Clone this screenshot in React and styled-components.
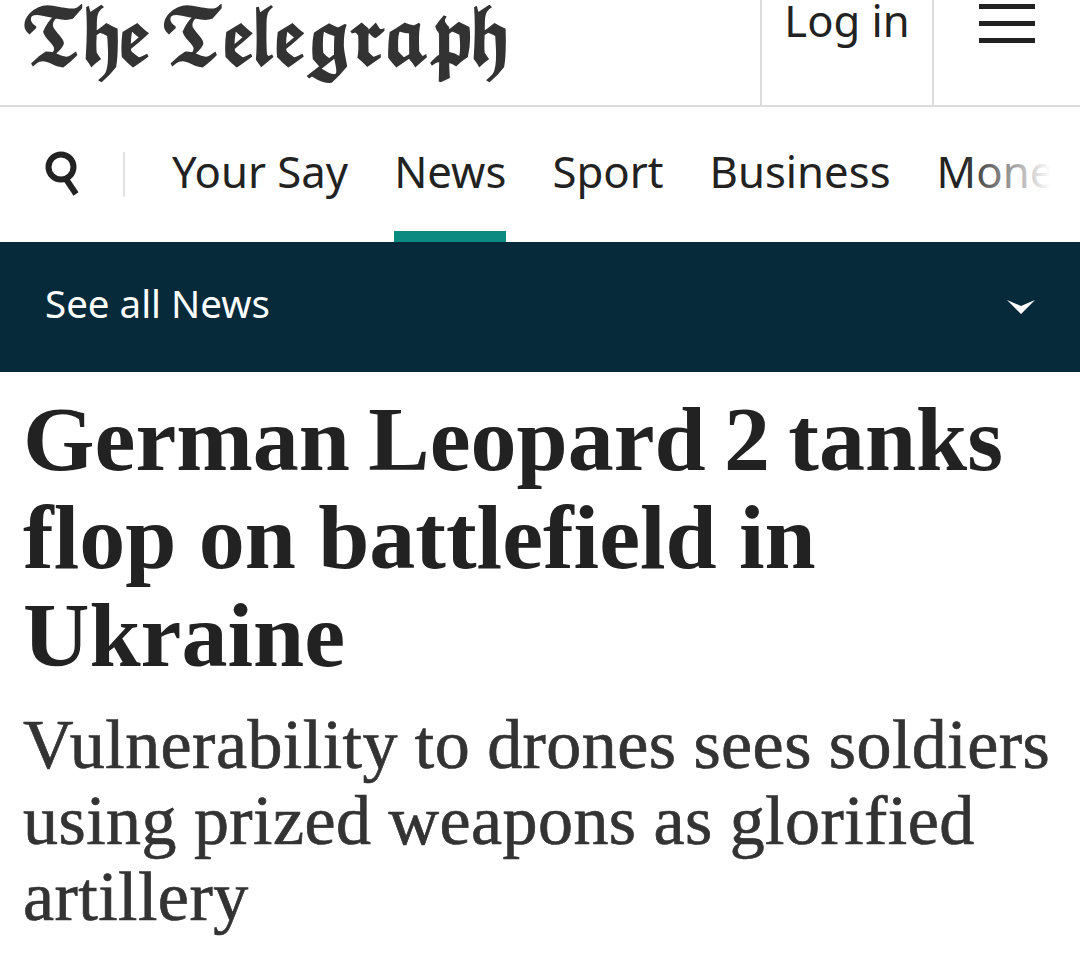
import React from "react";
import styled, { createGlobalStyle } from "styled-components";

const Global = createGlobalStyle`
  html, body { margin: 0; padding: 0; background: #fff; }
  body { width: 1080px; height: 956px; overflow: hidden; }
`;
const Page = styled.div`
  width: 1080px;
  height: 956px;
  overflow: hidden;
  color: #222;
`;
const Masthead = styled.header`
  display: flex;
  height: 105px;
  border-bottom: 2px solid #dcdcdc;
`;
const LogoCell = styled.div`
  flex: 1;
  padding: 0 0 0 20px;
`;
const Logo = styled.a`
  display: block;
  font-family: "DejaVu Math TeX Gyre", "Liberation Serif", serif;
  font-size: 74px;
  line-height: 84px;
  letter-spacing: -6px;
  word-spacing: -4px;
  color: #333;
  white-space: nowrap;
  -webkit-text-stroke: 1.8px #333;
  transform: scaleX(0.875);
  transform-origin: left center;
`;
const Login = styled.a`
  width: 174px;
  height: 105px;
  box-sizing: border-box;
  border-left: 2px solid #dcdcdc;
  border-right: 2px solid #dcdcdc;
  text-align: center;
  font-family: "Noto Sans", sans-serif;
  font-size: 43.5px;
  line-height: 41px;
  color: #222;
`;
const Menu = styled.button`
  width: 146px;
  height: 105px;
  padding: 4px 0 0 45px;
  border: 0;
  background: none;
  display: flex;
  flex-direction: column;
  gap: 12px;
`;
const MenuBar = styled.span`
  display: block;
  width: 56px;
  height: 5px;
  background: #222;
`;
const Nav = styled.nav`
  display: flex;
  align-items: stretch;
  height: 135px;
`;
const SearchCell = styled.div`
  display: flex;
  align-items: center;
  padding: 0 0 4px 45px;
`;
const Divider = styled.span`
  width: 2px;
  height: 45px;
  margin: 4px 47px 0 42px;
  background: #e2e2e2;
`;
const Tabs = styled.div`
  position: relative;
  display: flex;
  gap: 46px;
  width: 908px;
  overflow: hidden;
`;
const Tab = styled.a`
  display: flex;
  align-items: center;
  height: 135px;
  box-sizing: border-box;
  padding: 4px 0 0;
  font-family: "Noto Sans", sans-serif;
  font-size: 43.7px;
  color: #222;
  white-space: nowrap;
  border-bottom: 11px solid ${p => (p.$active ? "#0a8a80" : "transparent")};
`;
const Fade = styled.span`
  position: absolute;
  top: 0;
  left: 790px;
  width: 118px;
  height: 135px;
  background: linear-gradient(to right, rgba(255,255,255,0), #fff 75%);
`;
const Band = styled.div`
  display: flex;
  align-items: center;
  justify-content: space-between;
  height: 130px;
  box-sizing: border-box;
  padding: 0 44px 8px 45px;
  background: #072a3a;
  color: #fff;
  font-family: "Noto Sans", sans-serif;
  font-size: 38.5px;
`;
const Chevron = styled.svg`
  margin-top: 8px;
`;
const Article = styled.main`
  padding: 18px 24px 0 23px;
  font-family: "Liberation Serif", serif;
`;
const Title = styled.h1`
  margin: 0;
  font-size: 92px;
  line-height: 98px;
  font-weight: 700;
  color: #222;
`;
const TitleLine = styled.span`
  word-spacing: ${p => p.$gap};
`;
const Sub = styled.h2`
  margin: 23px 0 0;
  font-size: 70px;
  line-height: 76px;
  font-weight: 400;
  color: #333;
  letter-spacing: 0.45px;
  word-spacing: -1px;
  -webkit-text-stroke: 0.7px #333;
`;

export default function App() {
  return (
    <Page>
      <Global />
      <Masthead>
        <LogoCell>
          <Logo aria-label="The Telegraph">𝕿𝖍𝖊 𝕿𝖊𝖑𝖊𝖌𝖗𝖆𝖕𝖍</Logo>
        </LogoCell>
        <Login>Log in</Login>
        <Menu aria-label="Menu">
          <MenuBar />
          <MenuBar />
          <MenuBar />
        </Menu>
      </Masthead>
      <Nav>
        <SearchCell>
          <svg width="36" height="46" viewBox="0 0 36 46" fill="none">
            <circle cx="16" cy="17" r="12.5" stroke="#222" strokeWidth="6" />
            <path d="M21 29 L31 44" stroke="#222" strokeWidth="6" />
          </svg>
          <Divider />
        </SearchCell>
        <Tabs>
          <Tab>Your Say</Tab>
          <Tab $active>News</Tab>
          <Tab>Sport</Tab>
          <Tab>Business</Tab>
          <Tab>Money</Tab>
          <Fade />
        </Tabs>
      </Nav>
      <Band>
        <span>See all News</span>
        <Chevron width="30" height="16" viewBox="0 0 30 16">
          <path d="M1 1 L15 7 L29 1 L15 15 Z" fill="#fff" />
        </Chevron>
      </Band>
      <Article>
        <Title>
          <TitleLine $gap="-4.7px">German Leopard 2 tanks</TitleLine>{" "}
          <TitleLine $gap="-0.7px">flop on battlefield in</TitleLine>{" "}
          <TitleLine $gap="0">Ukraine</TitleLine>
        </Title>
        <Sub>Vulnerability to drones sees soldiers using prized weapons as glorified artillery</Sub>
      </Article>
    </Page>
  );
}
